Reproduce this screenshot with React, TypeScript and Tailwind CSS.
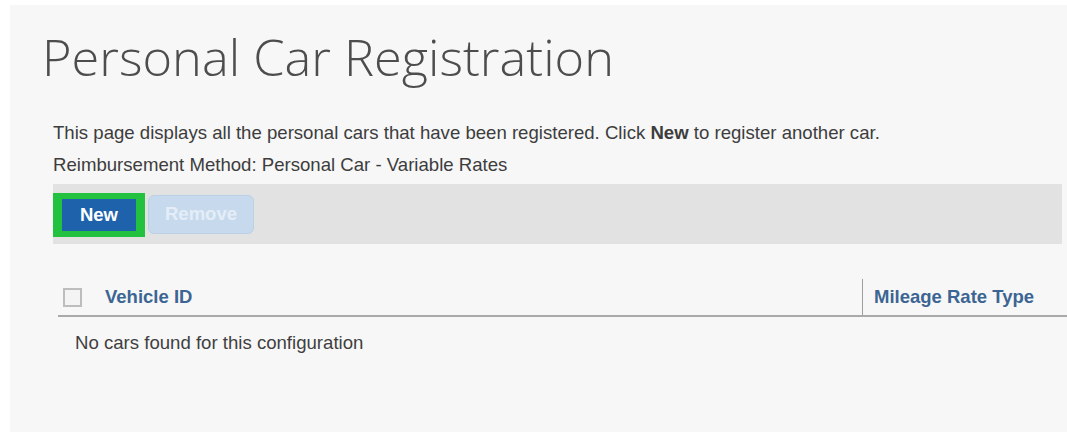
import React from 'react';

const sans = "font-['Liberation_Sans',Arial,sans-serif]";

const Toolbar: React.FC = () => (
  <div className="mt-[3px] mr-[5px] flex h-[60px] items-center gap-[3px] bg-[#e1e2e1]">
    <div className="mt-[1px] bg-[#22c13f] px-[9px] py-[6px]">
      <button className="flex h-[32px] w-[74px] items-center justify-center bg-[#1e62ab] text-[18.5px] font-bold text-white">
        New
      </button>
    </div>
    <button
      disabled
      className="flex h-[39px] w-[106px] items-center justify-center rounded-[6px] border border-[#bcd0e5] bg-[#c7daed] text-[18.5px] font-bold text-[#e4edf7]"
    >
      Remove
    </button>
  </div>
);

const CarTable: React.FC = () => (
  <div className="mt-[35px] ml-[5px]">
    <div className="flex h-[38px] items-center border-b-2 border-[#a9a9a9]">
      <div className="flex w-[804px] items-center pl-[5px]">
        <span className="h-[19px] w-[19px] border-2 border-[#bdbdbd] bg-[#f4f4f4]" />
        <span className="ml-[23px] text-[18.5px] font-bold text-[#3c6593]">Vehicle ID</span>
      </div>
      <div className="flex h-full items-center border-l border-[#9d9d9d] pl-[11px]">
        <span className="text-[18.5px] font-bold text-[#3c6593]">Mileage Rate Type</span>
      </div>
    </div>
    <p className="mt-[14px] pl-[17px] text-[18.6px] leading-[24px] text-[#3f3f3f]">
      No cars found for this configuration
    </p>
  </div>
);

export default function App() {
  return (
    <div className="h-[432px] w-[1067px] overflow-hidden bg-white pt-[5px] pl-[10px]">
      <div className={`h-full bg-[#f7f7f7] pt-[27px] ${sans}`}>
        <h1 className="ml-[32px] font-['Open_Sans',sans-serif] text-[50.5px] leading-[50px] font-light text-[#4d4d4d]">
          Personal Car Registration
        </h1>
        <div className="ml-[43px] mt-[35px]">
          <div className="text-[18.6px] leading-[32px] text-[#3d3d3d]">
            <p>
              This page displays all the personal cars that have been registered. Click{' '}
              <span className="font-bold">New</span> to register another car.
            </p>
            <p>Reimbursement Method: Personal Car - Variable Rates</p>
          </div>
          <Toolbar />
          <CarTable />
        </div>
      </div>
    </div>
  );
}
